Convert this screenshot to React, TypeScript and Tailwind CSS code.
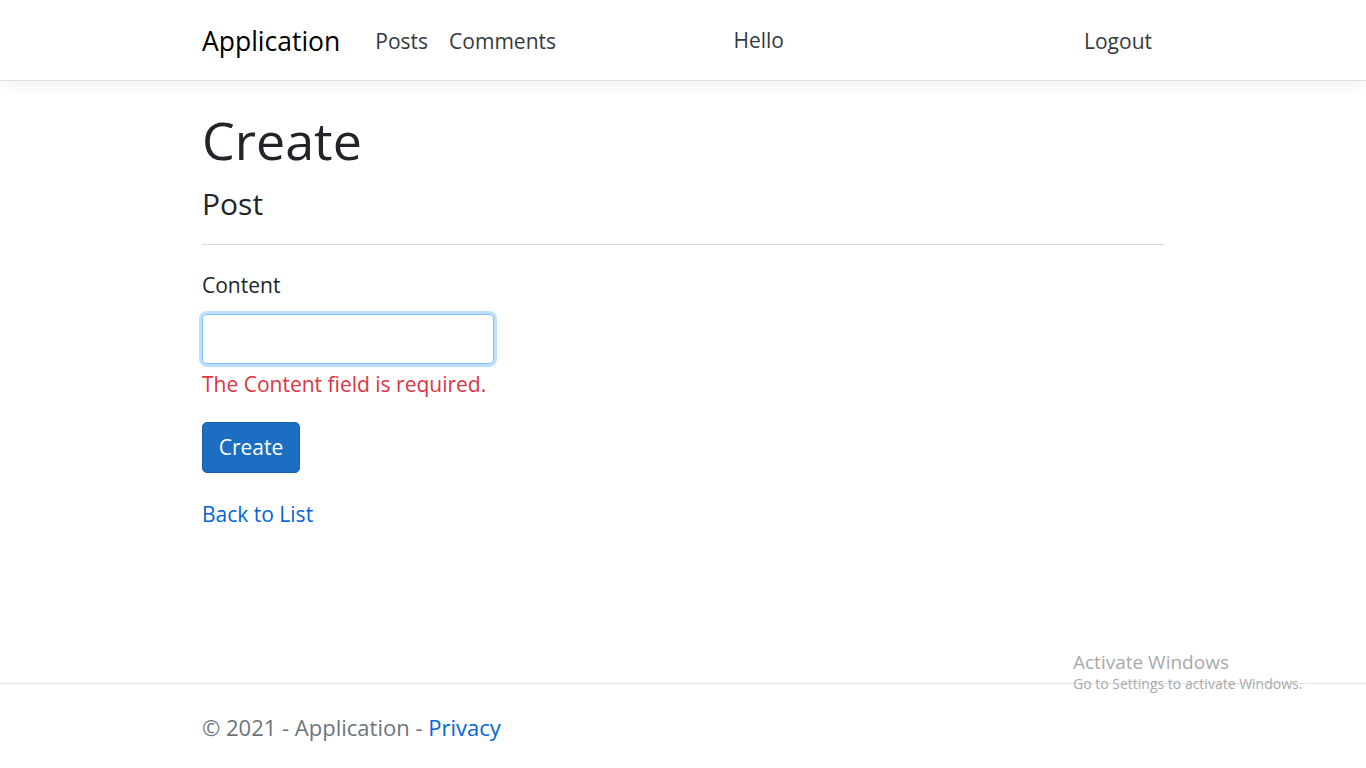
import React from "react";

const font = { fontFamily: '"Open Sans", "Noto Sans", sans-serif' };

export default function App() {
  return (
    <div className="min-h-screen flex flex-col bg-white text-[#212529] relative" style={font}>
      <header className="h-[81px] border-b border-[#dee2e6] bg-white shadow-[0_4px_14px_rgba(0,0,0,0.06)]">
        <nav className="w-[962px] mx-auto h-full flex items-center pt-[2px]">
          <a href="#" className="text-[26.5px] leading-[34px] text-black">
            Application
          </a>
          <ul className="flex flex-1 items-center ml-[35px] gap-[21px] text-[21px] leading-[30px] text-[#343a40]">
            <li>
              <a href="#">Posts</a>
            </li>
            <li>
              <a href="#">Comments</a>
            </li>
          </ul>
          <span className="text-[21px] leading-[30px] text-[#343a40] -mt-[2px]">Hello</span>
          <button className="ml-[300px] mr-[12px] text-[21px] leading-[30px] text-[#343a40]">Logout</button>
        </nav>
      </header>

      <main className="flex-1 w-[962px] mx-auto pt-[27px]">
        <h1 className="text-[52px] leading-[64px] font-normal">Create</h1>
        <h4 className="mt-[14px] text-[30px] leading-[36px]">Post</h4>
        <hr className="mt-[22px] border-t border-[#d6d6d6]" />

        <form className="mt-[25px] w-[292px]" onSubmit={(e) => e.preventDefault()}>
          <label className="block text-[21px] leading-[30px]">Content</label>
          <input
            className="mt-[14px] block w-[292px] h-[50px] rounded-[5px] border border-[#80bdff] px-3 outline-none shadow-[0_0_0_3px_rgba(0,123,255,0.25)]"
            autoFocus
          />
          <span className="mt-[5px] block whitespace-nowrap text-[21px] leading-[30px] text-[#dc3545]">
            The Content field is required.
          </span>
          <button
            type="submit"
            className="mt-[23px] w-[98px] h-[51px] rounded-[5px] border border-[#1861ac] bg-[#1b6ec2] text-white text-[21px]"
          >
            Create
          </button>
        </form>

        <div className="mt-[26px] text-[21px] leading-[30px]">
          <a href="#" className="text-[#0366d6]">
            Back to List
          </a>
        </div>
      </main>

      <footer className="h-[85px] border-t border-[#dee2e6]">
        <div className="w-[962px] mx-auto h-full flex items-center pt-[3px] text-[22px] text-[#6c757d]">
          © 2021 - Application -&nbsp;
          <a href="#" className="text-[#0366d6]">
            Privacy
          </a>
        </div>
      </footer>

      <div className="absolute left-[1073px] top-[649px] text-[#a9a9a9] pointer-events-none">
        <div className="text-[19px] leading-[26px]">Activate Windows</div>
        <div className="text-[14px] leading-[20px] -mt-[1px]">Go to Settings to activate Windows.</div>
      </div>
    </div>
  );
}
